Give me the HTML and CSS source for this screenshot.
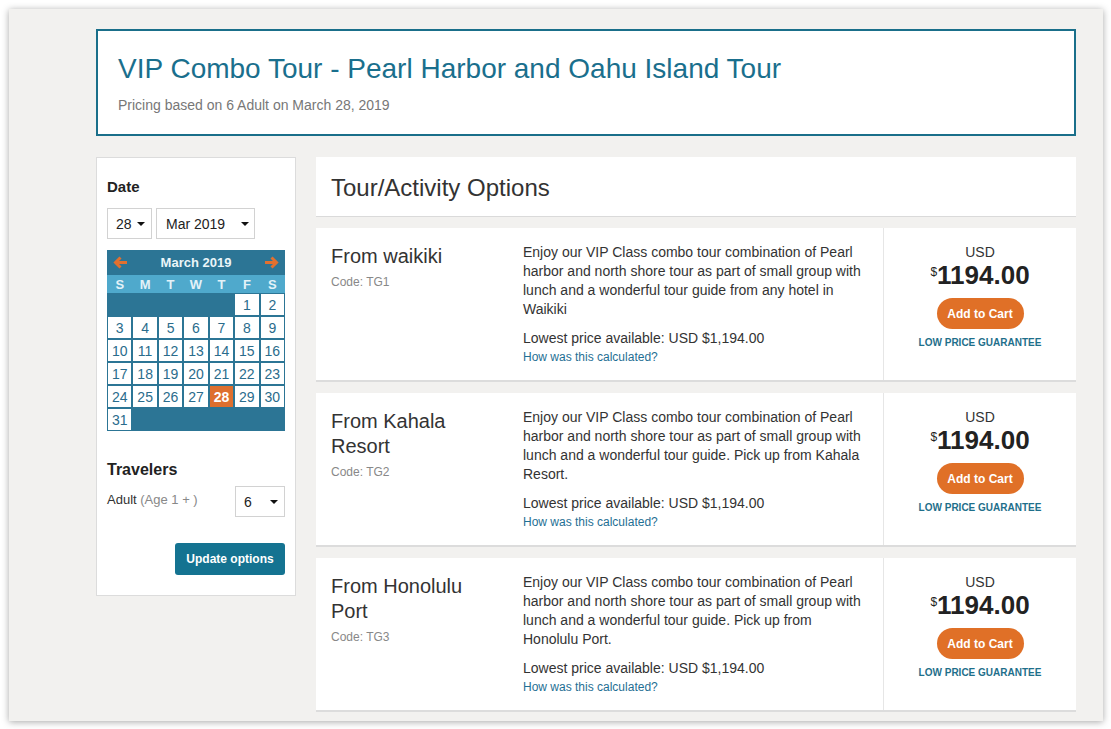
FILE: index.html
```html
<!DOCTYPE html>
<html lang="en">
<head>
<meta charset="utf-8">
<title>VIP Combo Tour</title>
<link rel="stylesheet" href="styles.css">
</head>
<body>
<div class="frame">
  <header class="tour-header">
    <h1 class="tour-title">VIP Combo Tour - Pearl Harbor and Oahu Island Tour</h1>
    <p class="tour-sub">Pricing based on 6 Adult on March 28, 2019</p>
  </header>

  <div class="layout">
    <aside class="sidebar">
      <h3 class="side-label">Date</h3>
      <div class="date-selects">
        <div class="select sel-day"><span>28</span><i class="caret"></i></div>
        <div class="select sel-month"><span>Mar 2019</span><i class="caret"></i></div>
      </div>

      <div class="calendar">
        <div class="cal-head">
          <svg class="cal-arrow" width="15" height="13" viewBox="0 0 15 13"><path d="M14 6.5H3M7.5 1.5L2.5 6.5L7.5 11.5" fill="none" stroke="#e2702f" stroke-width="3"/></svg>
          <span class="cal-month">March 2019</span>
          <svg class="cal-arrow" width="15" height="13" viewBox="0 0 15 13"><path d="M1 6.5H12M7.5 1.5L12.5 6.5L7.5 11.5" fill="none" stroke="#e2702f" stroke-width="3"/></svg>
        </div>
        <div class="cal-days">
          <span>S</span><span>M</span><span>T</span><span>W</span><span>T</span><span>F</span><span>S</span>
        </div>
        <div class="cal-grid">
          <span class="blank"></span><span class="blank"></span><span class="blank"></span><span class="blank"></span><span class="blank"></span><span>1</span><span>2</span>
          <span>3</span><span>4</span><span>5</span><span>6</span><span>7</span><span>8</span><span>9</span>
          <span>10</span><span>11</span><span>12</span><span>13</span><span>14</span><span>15</span><span>16</span>
          <span>17</span><span>18</span><span>19</span><span>20</span><span>21</span><span>22</span><span>23</span>
          <span>24</span><span>25</span><span>26</span><span>27</span><span class="sel">28</span><span>29</span><span>30</span>
          <span>31</span><span class="blank"></span><span class="blank"></span><span class="blank"></span><span class="blank"></span><span class="blank"></span><span class="blank"></span>
        </div>
      </div>

      <h3 class="side-label travelers">Travelers</h3>
      <div class="trav-row">
        <span class="trav-name">Adult <span class="trav-age">(Age 1 + )</span></span>
        <div class="select sel-count"><span>6</span><i class="caret"></i></div>
      </div>
      <div class="update-row"><button class="btn-update">Update options</button></div>
    </aside>

    <main class="options">
      <div class="options-head">Tour/Activity Options</div>

      <div class="card">
        <div class="c-name">
          <h2>From waikiki</h2>
          <div class="c-code">Code: TG1</div>
        </div>
        <div class="c-desc">
          <p>Enjoy our VIP Class combo tour combination of Pearl harbor and north shore tour as part of small group with lunch and a wonderful tour guide from any hotel in Waikiki</p>
          <p class="lowest">Lowest price available: USD $1,194.00</p>
          <a class="calc" href="#">How was this calculated?</a>
        </div>
        <div class="c-price">
          <div class="cur">USD</div>
          <div class="amount"><sup>$</sup>1194.00</div>
          <button class="btn-cart">Add to Cart</button>
          <div class="lpg">LOW PRICE GUARANTEE</div>
        </div>
      </div>

      <div class="card">
        <div class="c-name">
          <h2>From Kahala Resort</h2>
          <div class="c-code">Code: TG2</div>
        </div>
        <div class="c-desc">
          <p>Enjoy our VIP Class combo tour combination of Pearl harbor and north shore tour as part of small group with lunch and a wonderful tour guide. Pick up from Kahala Resort.</p>
          <p class="lowest">Lowest price available: USD $1,194.00</p>
          <a class="calc" href="#">How was this calculated?</a>
        </div>
        <div class="c-price">
          <div class="cur">USD</div>
          <div class="amount"><sup>$</sup>1194.00</div>
          <button class="btn-cart">Add to Cart</button>
          <div class="lpg">LOW PRICE GUARANTEE</div>
        </div>
      </div>

      <div class="card">
        <div class="c-name">
          <h2>From Honolulu Port</h2>
          <div class="c-code">Code: TG3</div>
        </div>
        <div class="c-desc">
          <p>Enjoy our VIP Class combo tour combination of Pearl harbor and north shore tour as part of small group with lunch and a wonderful tour guide. Pick up from Honolulu Port.</p>
          <p class="lowest">Lowest price available: USD $1,194.00</p>
          <a class="calc" href="#">How was this calculated?</a>
        </div>
        <div class="c-price">
          <div class="cur">USD</div>
          <div class="amount"><sup>$</sup>1194.00</div>
          <button class="btn-cart">Add to Cart</button>
          <div class="lpg">LOW PRICE GUARANTEE</div>
        </div>
      </div>
    </main>
  </div>
</div>
</body>
</html>
```

FILE: styles.css
```css
* { box-sizing: border-box; }
html, body { margin: 0; padding: 0; background: #fff; }
body {
  font-family: "Liberation Sans", Arial, sans-serif;
  color: #333;
  width: 1111px;
  height: 729px;
  overflow: hidden;
}
.frame {
  margin: 9px 0 0 9px;
  width: 1094px;
  height: 712px;
  background: #f2f1ef;
  box-shadow: 0 1px 7px rgba(0,0,0,0.35);
  padding: 20px 27px 0 87px;
  overflow: hidden;
}
.tour-header {
  background: #fff;
  border: 2px solid #1a6f8a;
  height: 107px;
  padding: 22px 20px 0 20px;
}
.tour-title {
  margin: 0;
  font-weight: normal;
  font-size: 28px;
  line-height: 32px;
  color: #1a6f8d;
}
.tour-sub {
  margin: 11px 0 0;
  font-size: 14px;
  line-height: 18px;
  color: #777;
}
.layout {
  display: flex;
  gap: 20px;
  margin-top: 21px;
  align-items: flex-start;
}
.sidebar {
  width: 200px;
  flex: none;
  background: #fff;
  border: 1px solid #dcdcdc;
  padding: 19px 10px 20px;
}
.side-label {
  margin: 0;
  font-size: 15px;
  line-height: 20px;
  font-weight: bold;
  color: #222;
}
.date-selects {
  display: flex;
  gap: 4px;
  margin-top: 11px;
}
.select {
  height: 31px;
  border: 1px solid #d2d2d2;
  background: #fff;
  display: flex;
  align-items: center;
  justify-content: space-between;
  font-size: 14px;
  color: #222;
}
.caret {
  width: 0; height: 0;
  border-left: 4px solid transparent;
  border-right: 4px solid transparent;
  border-top: 4px solid #111;
}
.sel-day { width: 45px; padding: 0 6px 0 8px; }
.sel-month { width: 99px; padding: 0 5px 0 9px; }
.sel-count { width: 50px; padding: 0 6px 0 8px; }

.calendar {
  margin-top: 11px;
  width: 178px;
  background: #2c7595;
}
.cal-head {
  height: 25px;
  display: flex;
  align-items: center;
  justify-content: space-between;
  padding: 0 6px 1px;
}
.cal-month {
  color: #eaf5f9;
  font-weight: bold;
  font-size: 13px;
}
.cal-days {
  height: 18px;
  background: #4fa9cc;
  display: grid;
  grid-template-columns: repeat(7, 1fr);
  padding: 0 1px;
  gap: 2px;
  align-items: center;
  text-align: center;
  color: #e3f2f8;
  font-weight: bold;
  font-size: 13px;
}
.cal-grid {
  display: grid;
  grid-template-columns: repeat(7, 1fr);
  grid-auto-rows: 21px;
  gap: 2px;
  padding: 1px;
}
.cal-grid span {
  background: #fff;
  color: #2a6c8c;
  font-size: 14px;
  display: flex;
  align-items: center;
  justify-content: center;
}
.cal-grid span.blank { background: transparent; }
.cal-grid span.sel {
  background: #de6f2e;
  color: #fff;
  font-weight: bold;
}

.travelers { margin-top: 29px; font-size: 16px; }
.trav-row {
  display: flex;
  justify-content: space-between;
  align-items: flex-start;
  margin-top: 6px;
}
.trav-name {
  font-size: 13px;
  color: #333;
  line-height: 18px;
  padding-top: 5px;
}
.trav-age { color: #888; }
.update-row {
  display: flex;
  justify-content: flex-end;
  margin-top: 26px;
}
.btn-update {
  width: 110px;
  height: 32px;
  border: 0;
  border-radius: 3px;
  background: #147391;
  color: #fff;
  font-family: inherit;
  font-weight: bold;
  font-size: 12px;
  padding: 0;
}

.options {
  width: 760px;
  flex: none;
}
.options-head {
  background: #fff;
  height: 60px;
  border-bottom: 1px solid #dadada;
  font-size: 24px;
  line-height: 61px;
  padding-left: 15px;
  color: #333;
}
.card {
  margin-top: 11px;
  background: #fff;
  height: 154px;
  border-bottom: 2px solid #dcdcdc;
  display: grid;
  grid-template-columns: 207px 360px 193px;
}
.c-name {
  padding: 16px 30px 0 15px;
}
.c-name h2 {
  margin: 0;
  font-weight: normal;
  font-size: 20px;
  line-height: 25px;
  color: #333;
}
.c-code {
  margin-top: 5px;
  font-size: 12px;
  line-height: 16px;
  color: #888;
}
.c-desc {
  padding: 15px 15px 0 0;
  font-size: 14px;
  line-height: 19px;
  color: #333;
}
.c-desc p { margin: 0; }
.c-desc .lowest { margin-top: 10px; }
.calc {
  font-size: 12px;
  color: #1f6f94;
  text-decoration: none;
  line-height: 19px;
  display: block;
}
.c-price {
  border-left: 1px solid #e6e6e6;
  padding-top: 15px;
  display: flex;
  flex-direction: column;
  align-items: center;
}
.cur {
  font-size: 14px;
  line-height: 18px;
  color: #333;
}
.amount {
  font-size: 26px;
  line-height: 28px;
  font-weight: bold;
  color: #222;
}
.amount sup {
  font-size: 12px;
  font-weight: normal;
  vertical-align: top;
  position: relative;
  top: -3px;
}
.btn-cart {
  margin-top: 9px;
  width: 87px;
  height: 31px;
  border: 0;
  border-radius: 16px;
  background: #e07027;
  color: #fff;
  font-family: inherit;
  font-weight: bold;
  font-size: 12px;
  padding: 0;
}
.lpg {
  margin-top: 8px;
  font-size: 10px;
  line-height: 12px;
  font-weight: bold;
  color: #1f6f8b;
}
```
